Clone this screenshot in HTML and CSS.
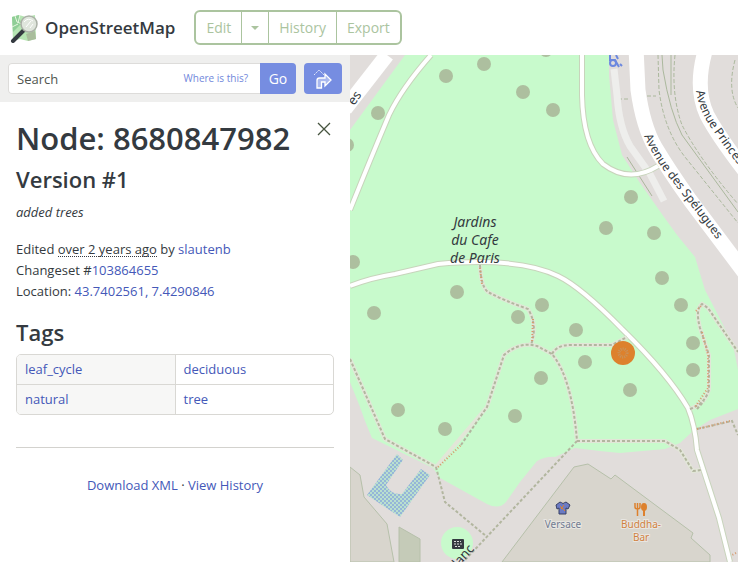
FILE: index.html
```html
<!DOCTYPE html>
<html lang="en">
<head>
<meta charset="utf-8">
<title>Node: 8680847982 | OpenStreetMap</title>
<link rel="stylesheet" href="styles.css">
</head>
<body>
<header class="header">
  <a class="brand" href="#">
    <svg class="logo" viewBox="0 0 30 30" aria-hidden="true">
      <path d="M2 4 9 2l7 2 9-2 1 24-8 2-8-2-7 2z" fill="#b6e5b3"/>
      <path d="M2 4 9 2l2 9-8 8z" fill="#8fce96"/>
      <path d="M16 21l9-3 1 8-8 2z" fill="#a9bd9c"/>
      <path d="M5 3l2 6 5 2 2 5-3 4M2 14l6-3M10 2l-2 8" fill="none" stroke="#e6f6df"/>
      <path d="M14 17 3 28" stroke="#343a40" stroke-width="4" stroke-linecap="round"/>
      <circle cx="19" cy="11" r="8" fill="#dfe5dc" stroke="#aab0a6" stroke-width="1.5"/>
      <path d="M14 9q4-5 9-1M16 14l5-6M20 15l3-4" fill="none" stroke="#fff"/>
    </svg>
    <span>OpenStreetMap</span>
  </a>
  <nav class="tabs">
    <button type="button">Edit</button>
    <button type="button" class="caret" aria-label="Choose editor"><svg viewBox="0 0 8 4"><path d="M0 0h8L4 4z" fill="currentColor"/></svg></button>
    <button type="button">History</button>
    <button type="button">Export</button>
  </nav>
</header>
<main class="content">
  <aside class="sidebar">
    <form class="search">
      <div class="field">
        <input type="text" placeholder="Search" aria-label="Search">
        <a href="#">Where is this?</a>
        <button type="button" class="go">Go</button>
      </div>
      <button type="button" class="directions" aria-label="Find directions">
        <svg viewBox="0 0 22 22"><path d="M5 20V12.500q0-2.500 2.500-2.500H13V6l6 6-6 6v-4H9.500v6z" fill="#a9b8ef" stroke="#fff" stroke-width="1.300"/><path d="M2 7l5-5 5 5" fill="none" stroke="#e4e9fb" stroke-dasharray="2 1"/></svg>
      </button>
    </form>
    <section class="details">
      <div class="title">
        <h1>Node: 8680847982</h1>
        <button type="button" class="close" aria-label="Close"><svg viewBox="0 0 14 14"><path d="M1 1l12 12M13 1 1 13" stroke="#46543f" stroke-width="1.300"/></svg></button>
      </div>
      <h2>Version #1</h2>
      <p class="comment">added trees</p>
      <ul class="meta">
        <li>Edited <abbr>over 2 years ago</abbr> by <a href="#">slautenb</a></li>
        <li>Changeset #<a href="#">103864655</a></li>
        <li>Location: <a href="#">43.7402561, 7.4290846</a></li>
      </ul>
      <h2>Tags</h2>
      <div class="tags">
        <table>
          <tr><th scope="row"><a href="#">leaf_cycle</a></th><td><a href="#">deciduous</a></td></tr>
          <tr><th scope="row"><a href="#">natural</a></th><td><a href="#">tree</a></td></tr>
        </table>
      </div>
      <hr>
      <p class="links"><a href="#">Download XML</a> · <a href="#">View History</a></p>
    </section>
  </aside>
  <section class="map" aria-label="Map">
    <svg viewBox="350 55 388 507" preserveAspectRatio="xMinYMin slice">
      <defs>
        <path id="spelugues" d="M644 136Q654 159 672 181 697 213 730 257"/>
        <path id="princesse" d="M696 91Q699 111 712 129 727 151 765 200"/>
        <pattern id="water" width="4" height="4" patternUnits="userSpaceOnUse"><rect width="4" height="4" fill="#b9e0cf"/><path d="M0 1h2M2 3h2" stroke="#728ce2" stroke-width="1"/></pattern>
      </defs>
      <rect class="ground" x="350" y="55" width="388" height="507"/>
      <!-- buildings -->
      <g class="building">
        <path d="M350 467 360 475 364 497 387 524 394 562H350z"/>
        <path d="M399 527 420 539V562H399z" class="dark"/>
        <path d="M502 562 574 467 588 464 611 479 615 475 693 533 691 538 710 555V562z"/>
      </g>
      <!-- park -->
      <path class="park" d="M405 55 350 130V382L360 407 365 421 372 438 433 468 440 478 487 504Q499 510 506 502L520 482 537 461Q547 456 555 457L575 448 600 451 620 453 665 449 680 443 693 431 710 420 738 409V370L733 345 718 315 705 290 695 257 677 235 664 217 640 183 622 155 613 120 609 75V55z"/>
      <circle class="park" cx="457" cy="543" r="16"/>
      <path d="M397 454 403 460 386 485Q391 495 402 494L421 469 430 475 400 517 367 495z" fill="url(#water)"/>
      <!-- railway and side paths -->
      <g class="rail">
        <path d="M662 55 663 70Q670 112 682 135L738 212"/>
        <path d="M671 55V95"/>
        <path class="dash" d="M658 55 659 90Q664 130 685 157L738 223M675 55Q671 95 682 125 700 160 738 204M735 60Q727 90 738 108M618 99H630M647 96H656"/>
      </g>
      <path class="block" d="M614 69 617 95Q619 127 630 146L650 174 664 201"/>
      <path d="M627 157 652 196" stroke="#aab59b"/>
      <!-- streets -->
      <path class="street" d="M387 55 345 109"/>
      <path class="street" d="M636 48 638 90Q643 126 655 147 668 169 690 200L750 280"/>
      <path class="street" d="M706 48Q694 87 707 115 719 138 752 180"/>
      <g class="walk edge"><path d="M431 55Q402 88 389 115 370 160 350 210"/><path d="M350 286Q370 278 395 274L438 264Q520 257 558 276 581 287 622 329 668 374 688 408 695 425 697 450L719 518 730 562"/><path d="M582 55V95Q583 144 603 164 629 184 658 166"/></g>
      <g class="walk"><path d="M431 55Q402 88 389 115 370 160 350 210"/><path d="M350 286Q370 278 395 274L438 264Q520 257 558 276 581 287 622 329 668 374 688 408 695 425 697 450L719 518 730 562"/><path d="M582 55V95Q583 144 603 164 629 184 658 166"/></g>
      <!-- footpaths -->
      <g class="foot under"><path d="M480 265Q481 287 488 292 505 301 528 309 538 325 531 345M350 359 385 439 436 467 487 407 504 355Q520 341 537 346L552 354Q572 378 577 441M552 354Q557 345 570 345H612L627 337M577 441H665L680 450 693 471 701 470M690 409Q706 403 709 389V355L700 328Q695 309 702 304L708 308 738 352"/></g>
      <g class="foot"><path d="M480 265Q481 287 488 292 505 301 528 309 538 325 531 345M350 359 385 439 436 467M461 445 487 407 504 355Q520 341 537 346L552 354Q572 378 577 441M552 354Q557 345 570 345H612L627 337M577 441H665L680 450 693 471 701 470M690 409Q706 403 709 389V355L700 328Q695 309 702 304L708 308 738 352M436 467 445 502 486 536M577 441 465 560M697 429 732 421 738 435M697 409 704 401"/></g>
      <path class="steps" d="M480 268 482 284M533 319 532 343M438 467 461 445M702 332 708 355V388L695 407M697 429 730 421M696 311 702 305M736 553 732 555"/>
      <!-- trees -->
      <g class="tree">
        <circle cx="378" cy="113" r="7"/><circle cx="446" cy="76" r="7"/><circle cx="484" cy="64" r="7"/><circle cx="523" cy="92" r="7"/><circle cx="553" cy="110" r="7"/><circle cx="347" cy="145" r="7"/><circle cx="353" cy="262" r="7"/><circle cx="374" cy="313" r="7"/><circle cx="457" cy="292" r="7"/><circle cx="518" cy="317" r="7"/><circle cx="542" cy="305" r="7"/><circle cx="576" cy="330" r="7"/><circle cx="541" cy="378" r="7"/><circle cx="585" cy="362" r="7"/><circle cx="630" cy="390" r="7"/><circle cx="693" cy="343" r="7"/><circle cx="693" cy="370" r="7"/><circle cx="681" cy="305" r="7"/><circle cx="662" cy="278" r="7"/><circle cx="654" cy="233" r="7"/><circle cx="606" cy="228" r="7"/><circle cx="631" cy="197" r="7"/><circle cx="398" cy="410" r="7"/><circle cx="445" cy="429" r="7"/><circle cx="515" cy="416" r="7"/><circle cx="546" cy="50" r="7"/>
      </g>
      <circle cx="623" cy="353" r="12" fill="#dd812d"/>
      <circle cx="623" cy="353" r="4" fill="none" stroke="#c9935a" stroke-width="3" stroke-dasharray="1 1"/>
      <!-- labels -->
      <g class="label park-name"><text x="475" y="227">Jardins</text><text x="475" y="245">du Cafe</text><text x="475" y="263">de Paris</text></g>
      <text class="label street-name"><textPath href="#spelugues">Avenue des Spélugues</textPath></text>
      <text class="label street-name"><textPath href="#princesse">Avenue Princesse</textPath></text>
      <text class="label" transform="translate(354 106) rotate(-54)">es</text>
      <text class="label" transform="translate(458 568) rotate(-48)">lanc</text>
      <g class="label poi"><text class="shop" x="563" y="528">Versace</text><text class="food" x="641" y="528">Buddha-</text><text class="food" x="641" y="541">Bar</text></g>
      <!-- point icons -->
      <path d="M560 502Q563 505 566 502L570 505 568 509 566 508V514H559V508L557 509 556 505z" fill="#6b7bc4" stroke="#384065"/>
      <path d="M560 506 565 511M564 505 561 509" stroke="#dd812d"/>
      <path d="M635 503V507Q635 509 637.500 509 640 509 640 507V503M637.500 503V516" fill="none" stroke="#dd812d" stroke-width="1.500"/>
      <path d="M644 509V516" stroke="#dd812d" stroke-width="2"/>
      <ellipse cx="644" cy="507" rx="3" ry="4" fill="#dd812d"/>
      <rect x="452" y="539" width="12" height="10" rx="1" fill="#343a40"/>
      <path d="M454 541.500H461M454 544H462M455 546.500H461" stroke="#ddd" stroke-dasharray="2 1"/>
      <g fill="none" stroke="#6c88df" stroke-width="2"><path d="M610 55V60H615L619 67M616 55 618 59M620 64 622 66"/><circle cx="613" cy="63" r="3"/></g>
    </svg>
  </section>
</main>
</body>
</html>
```
FILE: styles.css
```css
* { box-sizing: border-box; }
body {
  margin: 0;
  min-height: 100vh;
  display: flex;
  flex-direction: column;
  font: 13px/21px "Open Sans", "Noto Sans", sans-serif;
  color: #343a40;
  background: #fff;
}
a { color: #4458b8; text-decoration: none; }
button { font: inherit; border: 0; padding: 0; background: none; cursor: pointer; }
svg { display: block; }

.header { display: flex; align-items: center; gap: 19px; height: 55px; padding: 0 10px; }
.brand { display: flex; align-items: center; gap: 5px; color: #343a40; font-size: 17px; font-weight: 600; }
.logo { width: 30px; height: 30px; }
.tabs { display: flex; height: 35px; border: 2px solid #abc49f; border-radius: 6px; color: #abc49f; }
.tabs button { padding: 0 10px; color: inherit; font-size: 14px; }
.tabs button + button { border-left: 1px solid #abc49f; }
.tabs .caret { padding: 0 9px; }
.caret svg { width: 8px; height: 4px; }

.content { flex: 1; display: flex; min-height: 0; }
.sidebar { flex: 0 0 350px; }
.search { display: flex; gap: 8px; padding: 8px; background: #efefee; }
.field { flex: 1; display: flex; align-items: center; height: 31px; background: #fff; border-radius: 4px; box-shadow: inset 0 0 0 1px #dddcda; overflow: hidden; }
.field input { flex: 1; min-width: 0; height: 31px; padding: 0 9px; border: 0; background: none; font: inherit; color: #343a40; }
.field input::placeholder { color: #50564f; opacity: 1; }
.field a { padding-right: 12px; font-size: 10px; color: #7187db; }
.go, .directions { height: 31px; background: #768de1; color: #fff; }
.go { width: 36px; font-size: 14px; }
.directions { width: 38px; border-radius: 4px; display: flex; align-items: center; justify-content: center; }
.directions svg { width: 22px; height: 22px; }

.details { padding: 16px; }
.title { display: flex; justify-content: space-between; align-items: flex-start; }
h1, h2 { margin: 0; font-weight: 600; }
h1 { font-size: 31px; line-height: 40px; }
h2 { font-size: 22px; line-height: 28px; }
.title + h2 { margin-top: 7px; }
.close { padding: 4px 3px; }
.close svg { width: 14px; height: 14px; }
.comment { margin: 9px 0 16px; font-style: italic; }
.meta { margin: 0 0 16px; padding: 0; list-style: none; }
abbr { border-bottom: 1px dotted #343a40; display: inline-block; line-height: 14px; }
.tags { margin-top: 8px; border: 1px solid #d9d8d4; border-radius: 5px; overflow: hidden; }
table { width: 100%; border-collapse: collapse; table-layout: fixed; }
th, td { height: 29px; padding: 4px 8px; text-align: left; font-weight: 400; }
th { background: #f7f7f6; border-right: 1px solid #d9d8d4; }
tr + tr > * { border-top: 1px solid #d9d8d4; }
hr { margin: 32px 0 27px; border: 0; border-top: 1px solid #d3d2ce; }
.links { margin: 0; text-align: center; }

.map { flex: 1; position: relative; min-width: 0; overflow: hidden; }
.map > svg { position: absolute; width: 100%; height: 100%; }
.ground { fill: #e1dddb; }
.building { fill: #d8d5cd; stroke: #b6c0aa; }
.building .dark { fill: #c5cbb8; }
.park { fill: #c8facc; }
.rail { fill: none; stroke: #abb89d; }
.dash { stroke-dasharray: 4 2; stroke-width: 1; }
.block { fill: none; stroke: #eeeeec; stroke-width: 7; }
.street { fill: none; stroke: #fff; stroke-width: 15; }
.walk { fill: none; stroke: #fff; stroke-width: 4; }
.walk.edge { stroke: #c8d4bc; stroke-width: 6; }
.foot { fill: none; stroke: #b2b69f; stroke-width: 2; stroke-dasharray: 3 2; }
.foot.under { stroke: #e2e6d8; stroke-width: 4; stroke-dasharray: none; }
.steps { fill: none; stroke: #d69a6e; stroke-width: 2; stroke-dasharray: 1 2; }
.tree { fill: #adbf9f; }
.label { font: 13px "Noto Sans", sans-serif; fill: #343a40; }
.street-name { font-size: 12px; }
.park-name { font-size: 14px; font-style: italic; text-anchor: middle; }
.poi { font-size: 10px; text-anchor: middle; paint-order: stroke; stroke: #e8e6e2; stroke-width: 2px; }
.shop { fill: #727c91; }
.food { fill: #d1813e; }
```
